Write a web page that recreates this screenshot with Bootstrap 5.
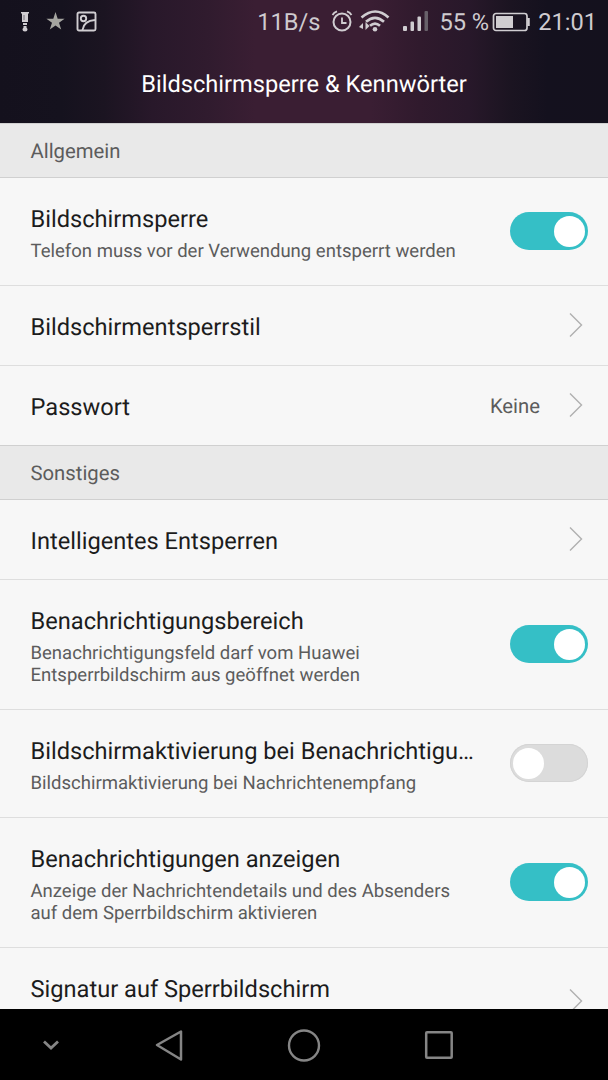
<!DOCTYPE html>
<html lang="de">
<head>
<meta charset="utf-8">
<meta name="viewport" content="width=device-width, initial-scale=1">
<title>Bildschirmsperre &amp; Kennwörter</title>
<link href="https://cdn.jsdelivr.net/npm/bootstrap@5.3.0/dist/css/bootstrap.min.css" rel="stylesheet">
<style>
body{font-family:Roboto,"Liberation Sans",sans-serif;background:#f7f7f7;color:#1c1c1c;text-rendering:geometricPrecision}
svg{display:block;flex:none}
.screen{height:1080px}
.top-area{height:123px;background:linear-gradient(90deg,#14111d 0,#15121e 10%,#1b1421 17%,#28182a 25%,#301b2e 34%,#3a1e33 42%,#3a1e33 61%,#301a2d 69%,#28182a 77%,#1b1421 84%,#14111e 90%,#14111d 100%)}
.status{height:44px;padding:0 11px 0 20px;color:#cfcbcf;font-size:23.64px;line-height:28px}
.page-title{height:79px;font-size:23.64px;line-height:80px;color:#fff}
.section-label{height:55px;padding-left:30.500px;background:#e9e9e9;border-top:1px solid #d0d0d0;border-bottom:1px solid #d0d0d0;color:#5c5c5c;font-size:20.3px;line-height:54px}
.setting{padding:0 20px 0 30.500px;background:#f7f7f7;border-bottom:1px solid #dedede;height:108px}
.setting.single{height:80px}
.setting.tall{height:130px}
.setting.final{height:79px;border-bottom:0}
.words{padding-top:27px;width:443px}
.name{font-size:23.64px;line-height:28px}
.detail{font-size:18.55px;line-height:22px;margin-top:7px;color:#5c5c5c}
.value{font-size:20.3px;line-height:24px;color:#5c5c5c;margin-right:28px}
.toggle{width:78px;height:38px;border-radius:19px;padding:0 3px;margin-bottom:1px;background:#dcdcdc;box-shadow:inset 0 0 0 1px #d4d4d4}
.toggle.on{background:#35bfc6;box-shadow:none}
.knob{width:31px;height:31px;background:#fff}
.arrow{margin:0 5px 1px 0}
.softkeys{height:71px;background:#000}
</style>
</head>
<body>
<div class="screen d-flex flex-column overflow-hidden">
<header class="top-area flex-shrink-0">
  <div class="status d-flex align-items-center">
    <svg width="10" height="24" viewBox="0 0 10 24" fill="#d0cdd1"><path d="M1 2h8v1.500H8V12H2V3.500H1zM3 13h4v2H3zM3.500 16h3v1.500l1 1.500a2.500 2.500 0 1 1-5 0l1-1.500z"/><path d="M4 5v5" stroke="#77737b"/></svg>
    <svg style="margin:0 0 2px 16px" width="19" height="20" viewBox="0 0 19 20" fill="#a5a5a0"><path d="M9.500 1l2.200 6.700h6.900l-5.600 4.100 2.200 6.700-5.700-4.100-5.700 4.100L6 11.800.4 7.700h6.900z"/></svg>
    <svg style="margin:0 0 2px 11px" width="21" height="21" viewBox="0 0 21 21" fill="none" stroke="#d0cdd1" stroke-width="1.900"><rect x="1.500" y="1.500" width="18" height="18" rx="1.500"/><circle cx="7.500" cy="7.500" r="2.700"/><path d="M6.500 19c.7-5.500 5-9.500 12.500-10"/></svg>
    <span class="ms-auto text-nowrap">11B/s</span>
    <svg style="margin:0 0 3px 11px" width="22" height="24" viewBox="0 0 22 24" fill="none" stroke="#d0cdd1" stroke-width="2"><circle cx="11" cy="13" r="8.500"/><path d="M11 8.500V14h4.500M1.500 6Q3 3.300 6 2.300M20.500 6Q19 3.300 16 2.300" stroke-width="1.800"/></svg>
    <svg style="margin:0 0 3px 6px" width="31" height="24" viewBox="0 0 31 24" fill="none" stroke="#d0cdd1" stroke-width="2.600"><path d="M2.500 8.500q14-12 27 0M7 12.800q9-8 18 0M11 16.800q5-4.500 10 0"/><circle cx="16" cy="20.300" r="2.300" fill="#d0cdd1" stroke="none"/><path d="M4 14v6L0 18zM6.500 13v8l4-4z" fill="#d0cdd1" stroke="none"/></svg>
    <svg style="margin:0 0 2px 13px" width="26" height="22" viewBox="0 0 26 22" fill="#d0cdd1"><rect x="0" y="16" width="4" height="5" rx="1"/><rect x="7.500" y="11.500" width="3.500" height="9.500" rx="1"/><rect x="14.500" y="6.500" width="3.500" height="14.500" rx="1"/><rect x="21.500" y="1" width="3.500" height="20" rx="1" fill="#68616a"/></svg>
    <span class="text-nowrap" style="margin-left:10px">55 %</span>
    <svg style="margin-left:3px" width="39" height="20" viewBox="0 0 39 20" fill="none" stroke="#d0cdd1" stroke-width="1.700"><rect x="1.500" y="1.500" width="33.500" height="17" rx="2.500"/><path d="M36.500 6v8" stroke-width="2.500"/><rect x="4" y="4" width="17" height="12" fill="#d0cdd1" stroke="none"/></svg>
    <span style="margin-left:7px">21:01</span>
  </div>
  <h1 class="page-title text-center fw-normal m-0">Bildschirmsperre &amp; Kennwörter</h1>
</header>
<main class="flex-grow-1 overflow-hidden" style="min-height:0">
  <div class="section-label">Allgemein</div>
  <div class="setting d-flex justify-content-between">
    <div class="words"><div class="name">Bildschirmsperre</div><div class="detail">Telefon muss vor der Verwendung entsperrt werden</div></div>
    <div class="toggle on d-flex align-items-center justify-content-end align-self-center"><span class="knob rounded-circle"></span></div>
  </div>
  <div class="setting single d-flex justify-content-between">
    <div class="words"><div class="name">Bildschirmentsperrstil</div></div>
    <svg class="arrow align-self-center" width="15" height="26" viewBox="0 0 15 26" fill="none" stroke="#b0b0b0" stroke-width="1.400"><path d="M2 1.500L13.500 13 2 24.500"/></svg>
  </div>
  <div class="setting final d-flex">
    <div class="words me-auto w-auto"><div class="name">Passwort</div></div>
    <span class="value align-self-center">Keine</span>
    <svg class="arrow align-self-center" width="15" height="26" viewBox="0 0 15 26" fill="none" stroke="#b0b0b0" stroke-width="1.400"><path d="M2 1.500L13.500 13 2 24.500"/></svg>
  </div>
  <div class="section-label">Sonstiges</div>
  <div class="setting single d-flex justify-content-between">
    <div class="words"><div class="name">Intelligentes Entsperren</div></div>
    <svg class="arrow align-self-center" width="15" height="26" viewBox="0 0 15 26" fill="none" stroke="#b0b0b0" stroke-width="1.400"><path d="M2 1.500L13.500 13 2 24.500"/></svg>
  </div>
  <div class="setting tall d-flex justify-content-between">
    <div class="words"><div class="name">Benachrichtigungsbereich</div><div class="detail">Benachrichtigungsfeld darf vom Huawei<br>Entsperrbildschirm aus geöffnet werden</div></div>
    <div class="toggle on d-flex align-items-center justify-content-end align-self-center"><span class="knob rounded-circle"></span></div>
  </div>
  <div class="setting d-flex justify-content-between">
    <div class="words"><div class="name text-nowrap">Bildschirmaktivierung bei Benachrichtigu…</div><div class="detail">Bildschirmaktivierung bei Nachrichtenempfang</div></div>
    <div class="toggle d-flex align-items-center align-self-center"><span class="knob rounded-circle"></span></div>
  </div>
  <div class="setting tall d-flex justify-content-between">
    <div class="words"><div class="name">Benachrichtigungen anzeigen</div><div class="detail">Anzeige der Nachrichtendetails und des Absenders<br>auf dem Sperrbildschirm aktivieren</div></div>
    <div class="toggle on d-flex align-items-center justify-content-end align-self-center"><span class="knob rounded-circle"></span></div>
  </div>
  <div class="setting d-flex justify-content-between">
    <div class="words"><div class="name">Signatur auf Sperrbildschirm</div></div>
    <svg class="arrow align-self-center" width="15" height="26" viewBox="0 0 15 26" fill="none" stroke="#b0b0b0" stroke-width="1.400"><path d="M2 1.500L13.500 13 2 24.500"/></svg>
  </div>
</main>
<nav class="softkeys d-flex align-items-center flex-shrink-0" aria-label="Navigation">
  <svg style="margin-left:42px" width="18" height="12" viewBox="0 0 18 12" fill="none" stroke="#858585" stroke-width="2.800"><path d="M2 2.500l7 6.500 7-6.500"/></svg>
  <svg style="margin-left:94px" width="30" height="34" viewBox="0 0 30 34" fill="none" stroke="#858585" stroke-width="2.500" stroke-linejoin="round"><path d="M3 17L27 3.500v28z"/></svg>
  <svg style="margin-left:103px" width="34" height="34" viewBox="0 0 34 34" fill="none" stroke="#858585" stroke-width="2.400"><circle cx="17" cy="17.500" r="15"/></svg>
  <svg style="margin-left:103px" width="30" height="30" viewBox="0 0 30 30" fill="none" stroke="#858585" stroke-width="2.500"><rect x="2.200" y="2.200" width="25.500" height="25.500" rx=".8"/></svg>
</nav>
</div>
<script src="https://cdn.jsdelivr.net/npm/bootstrap@5.3.0/dist/js/bootstrap.bundle.min.js"></script>
</body>
</html>
